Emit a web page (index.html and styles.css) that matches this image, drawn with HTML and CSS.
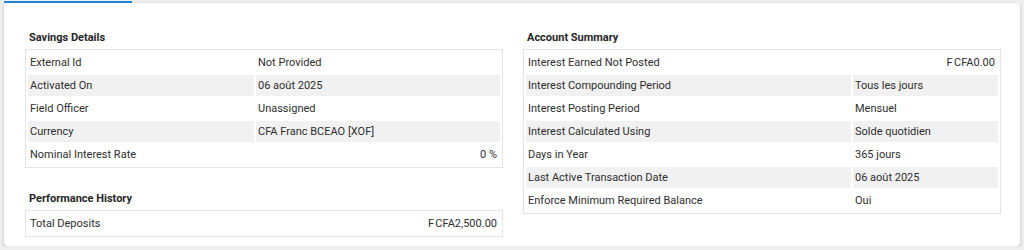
FILE: index.html
```html
<!DOCTYPE html>
<html lang="fr">
<head>
<meta charset="utf-8">
<title>Savings Account</title>
<link rel="stylesheet" href="styles.css">
</head>
<body>
<div class="tabs"><span class="ink"></span></div>
<div class="card">
  <div class="col">
    <h3 class="title">Savings Details</h3>
    <table class="kv">
      <colgroup><col class="kcol-left"><col></colgroup>
      <tr><td>External Id</td><td>Not Provided</td></tr>
      <tr><td>Activated On</td><td>06 août 2025</td></tr>
      <tr><td>Field Officer</td><td>Unassigned</td></tr>
      <tr><td>Currency</td><td>CFA Franc BCEAO [XOF]</td></tr>
      <tr><td colspan="2"><div class="split"><span>Nominal Interest Rate</span><span>0 %</span></div></td></tr>
    </table>
    <h3 class="title spaced">Performance History</h3>
    <table class="kv">
      <tr><td><div class="split"><span>Total Deposits</span><span>F&#8239;CFA2,500.00</span></div></td></tr>
    </table>
  </div>
  <div class="col">
    <h3 class="title">Account Summary</h3>
    <table class="kv">
      <colgroup><col class="kcol-right"><col></colgroup>
      <tr><td colspan="2"><div class="split"><span>Interest Earned Not Posted</span><span>F&#8239;CFA0.00</span></div></td></tr>
      <tr><td>Interest Compounding Period</td><td>Tous les jours</td></tr>
      <tr><td>Interest Posting Period</td><td>Mensuel</td></tr>
      <tr><td>Interest Calculated Using</td><td>Solde quotidien</td></tr>
      <tr><td>Days in Year</td><td>365 jours</td></tr>
      <tr><td>Last Active Transaction Date</td><td>06 août 2025</td></tr>
      <tr><td>Enforce Minimum Required Balance</td><td>Oui</td></tr>
    </table>
  </div>
</div>
</body>
</html>
```

FILE: styles.css
```css
html, body {
  margin: 0;
  padding: 0;
}
body {
  background: #eeeeee;
  font-family: Roboto, "Liberation Sans", Arial, sans-serif;
  color: #2e2e2e;
  font-size: 11px;
}
.tabs {
  height: 3px;
  padding-top: 1px;
  box-sizing: border-box;
}
.ink {
  display: block;
  width: 128px;
  height: 2px;
  margin-left: 4px;
  background: #2288d8;
}
.card {
  margin: 0 4px;
  background: #ffffff;
  border-radius: 4px;
  box-shadow: 0 1px 3px rgba(0, 0, 0, 0.22), 0 1px 1px rgba(0, 0, 0, 0.1);
  display: grid;
  grid-template-columns: 478px 478px;
  column-gap: 20px;
  padding: 27px 19px 8px 21px;
  height: 243px;
  box-sizing: border-box;
}
.title {
  margin: 0 0 3px;
  font-size: 11px;
  line-height: 16px;
  font-weight: 700;
  color: #262626;
  padding-left: 4px;
}
.title.spaced {
  margin-top: 23px;
}
.kv {
  width: 100%;
  table-layout: fixed;
  border-collapse: separate;
  border-spacing: 2px;
  border: 1px solid #e4e4e4;
}
.kcol-left { width: 226px; }
.kcol-right { width: 325px; }
.kv td {
  padding: 3px 2px;
  line-height: 15px;
  font-size: 11px;
  white-space: nowrap;
  vertical-align: middle;
}
.kv tr:nth-child(even) td {
  background: #f1f1f1;
}
.split {
  display: flex;
  justify-content: space-between;
  padding-right: 1px;
}
```
